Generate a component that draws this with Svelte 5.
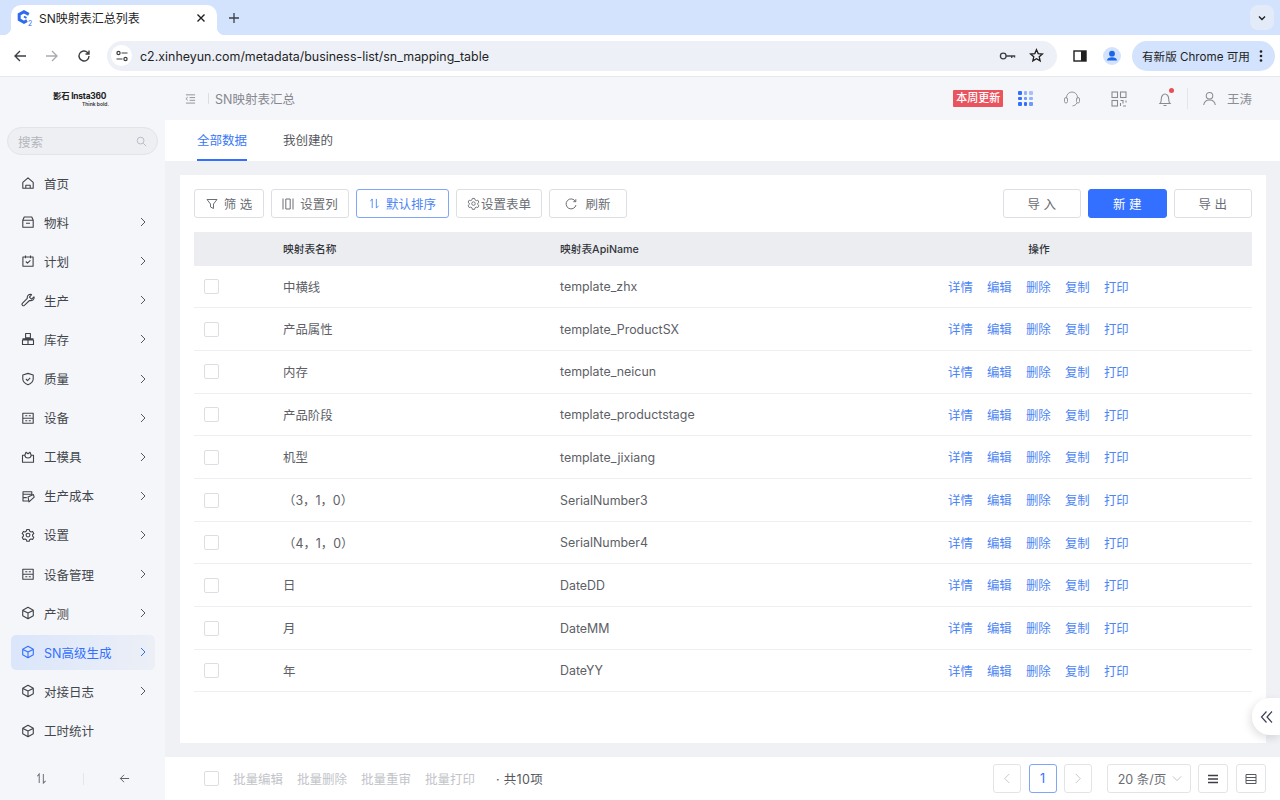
<script>
  const menu = [
    { label: '首页', icon: 'home', arrow: false },
    { label: '物料', icon: 'box', arrow: true },
    { label: '计划', icon: 'plan', arrow: true },
    { label: '生产', icon: 'wrench', arrow: true },
    { label: '库存', icon: 'stock', arrow: true },
    { label: '质量', icon: 'shield', arrow: true },
    { label: '设备', icon: 'device', arrow: true },
    { label: '工模具', icon: 'mould', arrow: true },
    { label: '生产成本', icon: 'cost', arrow: true },
    { label: '设置', icon: 'gear', arrow: true },
    { label: '设备管理', icon: 'device', arrow: true },
    { label: '产测', icon: 'cube', arrow: true },
    { label: 'SN高级生成', icon: 'cube', arrow: true, active: true },
    { label: '对接日志', icon: 'cube', arrow: true },
    { label: '工时统计', icon: 'cube', arrow: false }
  ];
  const gear = 'M5.800 1.500h2.400l.4 1.600 1.400.8 1.600-.5 1.200 2.100-1.200 1.100v1.600l1.200 1.100-1.200 2.100-1.600-.5-1.400.8-.4 1.600H5.800l-.4-1.600-1.400-.8-1.600.5-1.200-2.100 1.200-1.100V6.600L1.200 5.500l1.200-2.100 1.600.5 1.400-.8zM7 5.200a1.900 1.900 0 1 0 0 3.800 1.900 1.900 0 0 0 0-3.800z';
  const icons = {
    home: 'M1.800 6.300 7 1.800l5.200 4.500V12.300H1.800zM4.800 12.300V9.200h4.400v3.100',
    box: 'M3.200 2h7.600l1.400 3.200H1.800zM1.800 5.200h10.400V12.300H1.800zM5 8.300h4',
    plan: 'M1.900 3h10.200V12.300H1.900zM4.500 1.400v2.800M9.500 1.400v2.800M4.800 7.500l1.700 1.700L9.400 6.300',
    wrench: 'M13 3.800 10.600 6.200 8.400 4.200 10.600 1.600C8 .8 5.800 2.600 6.300 5.300L1.300 10.400c-1 1.400.8 3 2.100 1.900L8.500 7.500c2.800.6 5.200-1.200 4.500-3.700z',
    stock: 'M4.600 1.500h4.800v4.300H4.600zM1.500 8h5.500v4.500H1.500zM7 8h5.500v4.500H7zM1.500 6.900h11',
    shield: 'M7 1.400 12.200 3v4c0 3-2.400 4.600-5.200 5.800C4.200 11.600 1.800 10 1.800 7V3zM4.900 7l1.600 1.600 2.700-2.800',
    device: 'M1.800 2.300h10.400V12.300H1.800zM1.800 7.200h10.400M4.300 4.800h2M7.800 4.800h2M4.300 9.700h2M7.800 9.700h2',
    mould: 'M1.500 5.300h2.300c.2 1.600 1.500 2.700 3.200 2.700s3-1.100 3.200-2.700h2.300V12.300H1.500zM3.800 5.300 5 2.300l2 1.500 2-1.500 1.200 3',
    cost: 'M2 2.800h8.800v2.400H2zM2 5.200v6.800h5.500M2 8.600h3.800M7 8l5.400-2.400.8 2.600L8 12.800z',
    gear,
    cube: 'M7 1.300 12.300 4.200v5.600L7 12.700 1.700 9.800V4.200zM2 4.400 7 7l5-2.600M7 7v5.500'
  };
  const rows = [
    ['中横线', 'template_zhx'],
    ['产品属性', 'template_ProductSX'],
    ['内存', 'template_neicun'],
    ['产品阶段', 'template_productstage'],
    ['机型', 'template_jixiang'],
    ['（3，1，0）', 'SerialNumber3'],
    ['（4，1，0）', 'SerialNumber4'],
    ['日', 'DateDD'],
    ['月', 'DateMM'],
    ['年', 'DateYY']
  ];
  const actions = ['详情', '编辑', '删除', '复制', '打印'];
  const batch = ['批量编辑', '批量删除', '批量重审', '批量打印'];
</script>

<div class="browser">
  <div class="tabstrip">
    <div class="tab">
      <svg class="favicon" viewBox="0 0 16 16" width="16" height="16">
        <path d="M11.800 4.300 7 1.800 2.200 4.400v5.200L7 12.200l3-1.600" fill="none" stroke="#2f6bed" stroke-width="3"/>
        <path d="M7 6.500l2.500 1.500" stroke="#2f6bed" stroke-width="2"/>
        <text x="11" y="15.500" class="fav2">2</text>
      </svg>
      <span class="tabtitle">SN映射表汇总列表</span>
      <svg class="tabx" viewBox="0 0 10 10" width="10" height="10"><path d="M1.500 1.500l7 7M8.500 1.500l-7 7" stroke="#1f1f1f" stroke-width="1.400"/></svg>
    </div>
    <svg class="plus" viewBox="0 0 12 12" width="12" height="12"><path d="M6 1v10M1 6h10" stroke="#3c4043" stroke-width="1.300"/></svg>
    <div class="spring"></div>
    <div class="tabmenu"><svg viewBox="0 0 10 10" width="10" height="10"><path d="M2 3.500 5 6.500 8 3.500" fill="none" stroke="#1f1f1f" stroke-width="1.400"/></svg></div>
  </div>
  <div class="toolbar">
    <svg class="nav" viewBox="0 0 14 14" width="14" height="14"><path d="M13 7H2M7 2 2 7l5 5" fill="none" stroke="#3c4043" stroke-width="1.400"/></svg>
    <svg class="nav" viewBox="0 0 14 14" width="14" height="14"><path d="M1 7h11M7 2l5 5-5 5" fill="none" stroke="#a8abb0" stroke-width="1.400"/></svg>
    <svg class="nav" viewBox="0 0 14 14" width="14" height="14"><path d="M12 7a5 5 0 1 1-1.500-3.600L12 5M12 1.500V5H8.500" fill="none" stroke="#3c4043" stroke-width="1.400"/></svg>
    <div class="omnibox">
      <span class="site">
        <svg viewBox="0 0 14 14" width="14" height="14"><g fill="none" stroke="#3c4043" stroke-width="1.200"><circle cx="3.500" cy="4" r="1.600"/><path d="M6.500 4h6M1.500 10h6"/><circle cx="10.500" cy="10" r="1.600"/></g></svg>
      </span>
      <span class="url">c2.xinheyun.com/metadata/business-list/sn_mapping_table</span>
      <svg class="key" viewBox="0 0 18 12" width="17" height="12"><g fill="none" stroke="#3c4043" stroke-width="1.400"><circle cx="4.500" cy="6" r="3"/><path d="M7.500 6h9v1.500M13.500 6v2"/></g></svg>
      <svg class="star" viewBox="0 0 16 16" width="15" height="15"><path d="M8 1.800 9.800 6l4.500.4-3.400 3 1 4.400L8 11.500l-3.900 2.300 1-4.400-3.400-3L6.200 6z" fill="none" stroke="#1f1f1f" stroke-width="1.400"/></svg>
    </div>
    <svg class="panel" viewBox="0 0 14 14" width="14" height="14"><rect x="1" y="2" width="12" height="10" fill="none" stroke="#1f1f1f" stroke-width="1.400"/><rect x="8" y="2" width="5" height="10" fill="#1f1f1f"/></svg>
    <span class="avatar"><svg viewBox="0 0 18 18" width="18" height="18"><circle cx="9" cy="9" r="9" fill="#d3e3fd"/><circle cx="9" cy="6.700" r="2.900" fill="#1a66e8"/><path d="M3.800 13.500c.5-2.400 2.700-3.200 5.200-3.200s4.700.8 5.200 3.200z" fill="#1a66e8"/></svg></span>
    <div class="update">
      <span>有新版 Chrome 可用</span>
      <svg viewBox="0 0 4 14" width="4" height="14"><g fill="#1f1f1f"><circle cx="2" cy="2.500" r="1.300"/><circle cx="2" cy="7" r="1.300"/><circle cx="2" cy="11.500" r="1.300"/></g></svg>
    </div>
  </div>
</div>

<div class="app">
  <aside class="sidebar">
    <div class="logo">
      <div class="logomark">影石 Insta360</div>
      <div class="logosub">Think bold.</div>
    </div>
    <div class="search">
      <span>搜索</span>
      <svg viewBox="0 0 12 12" width="11" height="11"><circle cx="5" cy="5" r="3.700" fill="none" stroke="#b4b8c0" stroke-width="1"/><path d="M8 8l3 3" stroke="#b4b8c0"/></svg>
    </div>
    <nav class="menu">
      {#each menu as item}
        <div class="item" class:active={item.active}>
          <svg class="micon" viewBox="0 0 14 14" width="14" height="14"><path d={icons[item.icon]} fill="none" stroke="currentColor" stroke-width="1.100" stroke-linejoin="round"/></svg>
          <span class="mlabel">{item.label}</span>
          {#if item.arrow}
            <svg class="marrow" viewBox="0 0 8 10" width="8" height="10"><path d="M2 1l4 4-4 4" fill="none" stroke="currentColor" stroke-width="1"/></svg>
          {/if}
        </div>
      {/each}
    </nav>
    <div class="sidefoot">
      <svg viewBox="0 0 12 12" width="11" height="11"><path d="M3.500 11V1L1.500 3.500M8 1v10l2.500-2.500" fill="none" stroke="#6b6f76" stroke-width="1.100"/></svg>
      <span class="footsep"></span>
      <svg viewBox="0 0 12 12" width="11" height="11"><path d="M11 6H1.500M5.500 2 1.500 6l4 4" fill="none" stroke="#50545b" stroke-width="1"/></svg>
    </div>
  </aside>

  <main class="main">
    <header class="topbar">
      <svg class="fold" viewBox="0 0 12 12" width="11" height="11"><path d="M1 2h10M5 5h6M5 8h6M1 11h10M3 4.500 1 6.200 3 8" fill="none" stroke="#8a8d93" stroke-width="1"/></svg>
      <span class="crumbsep"></span>
      <span class="crumb">SN映射表汇总</span>
      <div class="spring"></div>
      <span class="weekly">本周更新</span>
      <span class="dots">
        {#each [1,.5,.4,1,.7,.5,1,1,.7] as o}
          <i style="opacity:{o}"></i>
        {/each}
      </span>
      <svg class="headset" viewBox="0 0 18 18" width="18" height="18"><path d="M3.500 8.500V7.500a5.500 5.500 0 0 1 11 0v1M13.800 13c-.6 1.800-2.400 2.800-4.300 2.800" fill="none" stroke="#95989e" stroke-width="1"/><rect x="1.500" y="7.500" width="3" height="5.500" rx="1.500" fill="none" stroke="#95989e"/><rect x="13.500" y="7.500" width="3" height="5.500" rx="1.500" fill="none" stroke="#95989e"/></svg>
      <svg class="qr" viewBox="0 0 16 16" width="16" height="16"><g fill="none" stroke="#888b91" stroke-width="1.100"><rect x="1" y="1" width="5.500" height="5.500"/><rect x="9.500" y="1" width="5.500" height="5.500"/><rect x="1" y="9.500" width="5.500" height="5.500"/><path d="M9.500 9.500h2.500v3M15 9.500v2M9.500 12v3M12 15h3"/></g></svg>
      <span class="bell">
        <svg viewBox="0 0 16 16" width="16" height="16"><path d="M3 12.500h10c-1-1-1.300-2.200-1.300-4.500 0-2.800-1.800-5-3.700-5S4.300 5.200 4.300 8c0 2.300-.3 3.500-1.300 4.500zM6.500 14.500h3" fill="none" stroke="#888b91" stroke-width="1.100"/></svg>
        <b></b>
      </span>
      <span class="usersep"></span>
      <svg class="user" viewBox="0 0 16 16" width="15" height="15"><circle cx="8" cy="5" r="3.500" fill="none" stroke="#888b91" stroke-width="1.100"/><path d="M1.800 15c.4-3.500 3-5.500 6.200-5.500s5.800 2 6.200 5.500" fill="none" stroke="#888b91" stroke-width="1.100"/></svg>
      <span class="username">王涛</span>
    </header>

    <div class="tabs">
      <span class="t on">全部数据</span>
      <span class="t">我创建的</span>
    </div>

    <div class="canvas">
      <section class="card">
        <div class="actions">
          <button class="btn w-filter">
            <svg viewBox="0 0 12 12" width="12" height="12"><path d="M1 1.500h10L7.500 6v4.500l-3-1.500V6z" fill="none" stroke="#6b6f76"/></svg>
            <span class="sp">筛 选</span>
          </button>
          <button class="btn w-col">
            <svg viewBox="0 0 12 12" width="12" height="12"><path d="M1 .5v11M11 .5v11M3.800 1h4.400v10H3.800z" fill="none" stroke="#6b6f76"/></svg>
            <span>设置列</span>
          </button>
          <button class="btn primaryline w-sort">
            <svg viewBox="0 0 12 12" width="11" height="11"><path d="M3.500 11V1L1.500 3.500M8 1v10l2.500-2.500" fill="none" stroke="#4d85f5" stroke-width="1"/></svg>
            <span>默认排序</span>
          </button>
          <button class="btn w-form">
            <svg viewBox="0 0 14 14" width="13" height="13"><path d={gear} fill="none" stroke="#6b6f76"/></svg>
            <span class="tight">设置表单</span>
          </button>
          <button class="btn w-refresh">
            <svg viewBox="0 0 12 12" width="12" height="12"><path d="M10.500 3.500A5 5 0 1 0 11 7M10.800 1.200v2.500H8.300" fill="none" stroke="#6b6f76"/></svg>
            <span>刷新</span>
          </button>
          <div class="spring"></div>
          <button class="btn w-side">导 入</button>
          <button class="btn solid w-side">新 建</button>
          <button class="btn w-side">导 出</button>
        </div>

        <div class="grid head">
          <span></span>
          <span class="hcell">映射表名称</span>
          <span class="hcell">映射表ApiName</span>
          <span class="hcell center">操作</span>
        </div>
        {#each rows as r}
          <div class="grid row">
            <span class="check"></span>
            <span class="cell">{r[0]}</span>
            <span class="cell">{r[1]}</span>
            <span class="links">
              {#each actions as a}<span>{a}</span>{/each}
            </span>
          </div>
        {/each}

        <button class="collapse" aria-label="collapse">
          <svg viewBox="0 0 14 14" width="14" height="14"><path d="M6.500 1.500 1.500 7l5 5.500M12 1.500 7 7l5 5.500" fill="none" stroke="#3c4257" stroke-width="1.200"/></svg>
        </button>
      </section>
    </div>

    <footer class="bottom">
      <span class="check"></span>
      <div class="batch">
        {#each batch as b}<span>{b}</span>{/each}
      </div>
      <span class="total">· 共10项</span>
      <div class="spring"></div>
      <span class="pg"><svg viewBox="0 0 8 12" width="8" height="11"><path d="M6.500 1 1.500 6l5 5" fill="none" stroke="#c2c5cb"/></svg></span>
      <span class="pg cur">1</span>
      <span class="pg"><svg viewBox="0 0 8 12" width="8" height="11"><path d="M1.500 1l5 5-5 5" fill="none" stroke="#c2c5cb"/></svg></span>
      <span class="size">20 条/页
        <svg viewBox="0 0 12 8" width="10" height="7"><path d="M1 1.500 6 6.500l5-5" fill="none" stroke="#b4b8c0"/></svg>
      </span>
      <span class="vbtn"><svg viewBox="0 0 12 12" width="12" height="12"><path d="M1 2.500h10M1 6h10M1 9.500h10" stroke="#3c3f45" stroke-width="1.300"/></svg></span>
      <span class="vbtn"><svg viewBox="0 0 12 12" width="12" height="12"><path d="M1 1.500h10v9H1zM1 4.500h10M1 7.500h10" fill="none" stroke="#55585e" stroke-width="1"/></svg></span>
    </footer>
  </main>
</div>

<style>
  :global(body) {
    margin: 0;
    overflow: hidden;
    font-family: Inter, "Noto Sans CJK SC", sans-serif;
    color: #4a4d53;
  }
  button { font: inherit; }
  svg { flex: none; display: block; }
  .spring { flex: 1; }

  .tabstrip {
    height: 35px;
    background: #d3e3fd;
    display: flex;
    align-items: flex-end;
    padding-left: 11px;
    padding-right: 6px;
  }
  .tab {
    width: 206px;
    height: 30px;
    background: #fff;
    border-radius: 10px 10px 0 0;
    display: flex;
    align-items: center;
    padding: 0 11px 5px 6px;
    box-sizing: border-box;
    position: relative;
  }
  .tab::before, .tab::after {
    content: "";
    position: absolute;
    bottom: 0;
    width: 8px;
    height: 8px;
  }
  .tab::before { left: -8px; background: radial-gradient(circle at 0 0, #d3e3fd 8px, #fff 8.500px); }
  .tab::after { right: -8px; background: radial-gradient(circle at 100% 0, #d3e3fd 8px, #fff 8.500px); }
  .favicon { margin-right: 6px; }
  .fav2 { font-size: 7px; fill: #2f6bed; }
  .tabtitle { font-size: 12px; color: #1f1f1f; flex: 1; }
  .plus { margin: 0 0 11px 11px; }
  .tabmenu {
    width: 24px;
    height: 25px;
    border-radius: 8px;
    background: #e3ebf9;
    margin-bottom: 5px;
    display: flex;
    align-items: center;
    justify-content: center;
  }
  .toolbar {
    height: 41px;
    background: #fff;
    border-bottom: 1px solid #e8e9ec;
    display: flex;
    align-items: center;
    padding: 0 5px 0 13px;
  }
  .nav { margin-right: 18px; }
  .nav:nth-child(3) { margin-right: 16px; }
  .omnibox {
    width: 950px;
    flex: none;
    height: 30px;
    border-radius: 15px;
    background: #edf0f7;
    display: flex;
    align-items: center;
    box-sizing: border-box;
    padding: 0 13.500px 0 4px;
  }
  .site {
    width: 21px;
    height: 21px;
    border-radius: 50%;
    background: #fff;
    display: flex;
    align-items: center;
    justify-content: center;
    margin-right: 8px;
  }
  .url { font-size: 12.430px; color: #1f1f1f; flex: 1; padding-top: 1px; }
  .key { margin-right: 13px; }
  .panel { margin-left: 16px; }
  .avatar { margin-left: 16px; margin-right: 11px; }
  .update {
    width: 143px;
    flex: none;
    height: 30px;
    border-radius: 15px;
    background: #d3e3fd;
    display: flex;
    align-items: center;
    justify-content: space-between;
    padding: 0 12px 0 10px;
    box-sizing: border-box;
    font-size: 11.600px;
    color: #1f1f1f;
  }

  .app { display: flex; height: 723px; background: #f5f6fa; }
  .sidebar {
    width: 165px;
    flex: none;
    display: flex;
    flex-direction: column;
    position: relative;
  }
  .logo { height: 50px; padding: 14px 0 0 53px; box-sizing: border-box; }
  .logomark { font-size: 8.400px; font-weight: 700; color: #222; line-height: 10px; white-space: nowrap; letter-spacing: -.2px; }
  .logosub { font-size: 5px; font-weight: 600; color: #333; line-height: 6px; padding-left: 29px; white-space: nowrap; }
  .search {
    margin: 0 7px 0 7px;
    height: 28px;
    box-sizing: border-box;
    border: 1px solid #e2e4e9;
    border-radius: 14px;
    background: #edeff3;
    display: flex;
    align-items: center;
    justify-content: space-between;
    padding: 0 10px;
    font-size: 12.500px;
    color: #b3b6bc;
  }
  .menu { display: flex; flex-direction: column; margin-top: 10.500px; padding: 0 10px 0 11px; gap: 4.120px; }
  .item {
    height: 35px;
    flex: none;
    display: flex;
    align-items: center;
    padding: 0 8px 0 10px;
    border-radius: 5px;
    font-size: 12.500px;
    color: #43464c;
  }
  .micon { margin-right: 9px; color: #3f4248; }
  .mlabel { flex: 1; white-space: nowrap; }
  .marrow { color: #55585e; }
  .active { background: linear-gradient(90deg, #dbe6fb, #eceff6); color: #3370ff; }
  .active .micon, .active .marrow { color: #3370ff; }
  .sidefoot {
    position: absolute;
    left: 0;
    right: 0;
    bottom: 0;
    height: 43px;
    display: flex;
    align-items: center;
    padding-left: 36px;
  }
  .footsep { width: 1px; height: 12px; background: #e3e5e9; margin: 0 35px 0 36px; }

  .main { flex: 1; min-width: 0; display: flex; flex-direction: column; }
  .topbar {
    height: 43px;
    display: flex;
    align-items: center;
    flex: none;
    padding-right: 28px;
    padding-left: 20px;
  }
  .crumbsep { width: 1px; height: 11px; background: #dcdee2; margin: 0 6px 0 12px; }
  .crumb { font-size: 12.500px; color: #85888e; }
  .weekly {
    width: 50px;
    height: 17px;
    line-height: 17px;
    text-align: center;
    background: #e9545f;
    color: #fff;
    font-size: 11px;
    font-weight: 500;
    border-radius: 1px;
    margin-right: 15px;
  }
  .dots {
    display: grid;
    grid-template-columns: repeat(3, 3.600px);
    gap: 2px;
    margin-right: 30px;
  }
  .dots i { width: 3.600px; height: 3.600px; background: #3370ff; border-radius: 1px; display: block; }
  .headset { margin-right: 30px; }
  .qr { margin-right: 30px; }
  .bell { position: relative; margin-right: 14px; }
  .bell b {
    position: absolute;
    top: -3px;
    right: -1px;
    width: 5px;
    height: 5px;
    border-radius: 50%;
    background: #ec4d55;
  }
  .usersep { width: 1px; height: 21px; background: #e5e6ea; margin-right: 14px; }
  .username { margin-left: 10px; font-size: 12.500px; color: #8b8e94; }

  .tabs {
    height: 41px;
    flex: none;
    background: #fff;
    display: flex;
    padding-left: 32px;
    gap: 36px;
    font-size: 12.500px;
    color: #55585e;
    box-sizing: border-box;
  }
  .t { padding-top: 13px; height: 41px; box-sizing: border-box; line-height: 16px; }
  .on { color: #3a78f5; border-bottom: 2px solid #3370ff; }

  .canvas {
    flex: 1;
    min-height: 0;
    background: #f0f1f5;
    padding: 14px 14px 14px 15px;
    display: flex;
  }
  .card {
    flex: 1;
    background: #fff;
    padding: 14px 14px 0;
    position: relative;
  }
  .actions { display: flex; gap: 7px; height: 29px; margin-bottom: 14px; }
  .btn {
    height: 29px;
    box-sizing: border-box;
    border: 1px solid #dddfe4;
    border-radius: 3px;
    background: #fff;
    color: #6a6d73;
    font-size: 12.500px;
    display: flex;
    align-items: center;
    justify-content: center;
    gap: 6px;
    padding: 0;
  }
  .w-filter { width: 70px; }
  .w-col { width: 78px; }
  .w-sort { width: 93px; color: #4d85f5; }
  .w-form { width: 86px; gap: 1px; }
  .w-refresh { width: 78px; gap: 8px; }
  .w-side { width: 78.500px; }
  .primaryline { border-color: #7fa6f7; }
  .solid { background: #3370ff; border-color: #3370ff; color: #fff; }

  .grid {
    display: grid;
    grid-template-columns: 89px 277px 352px 1fr;
    align-items: center;
  }
  .head {
    height: 33.500px;
    background: #ebedf0;
    font-size: 10.700px;
    color: #33363b;
    font-weight: 500;
  }
  .center { text-align: center; padding-right: 86px; }
  .row {
    height: 42.700px;
    box-sizing: border-box;
    padding-top: .5px;
    border-bottom: 1px solid #eeeff2;
    font-size: 12.400px;
    color: #5d6066;
  }
  .check {
    width: 15px;
    height: 15px;
    box-sizing: border-box;
    border: 1px solid #dcdee3;
    border-radius: 2px;
    background: #fff;
    display: block;
    margin-left: 10px;
  }
  .links { display: flex; gap: 14.200px; color: #4d85f5; padding-left: 36px; }

  .collapse {
    position: absolute;
    right: -14px;
    top: 523px;
    width: 28px;
    height: 37px;
    padding: 0 0 0 2px;
    border: 0;
    background: #fff;
    border-radius: 18px 0 0 18px;
    box-shadow: -2px 3px 8px rgba(0, 0, 0, .12);
    display: flex;
    align-items: center;
    justify-content: center;
  }

  .bottom {
    height: 43px;
    flex: none;
    background: #fff;
    display: flex;
    align-items: center;
    padding: 0 14px 0 39px;
    font-size: 12.500px;
  }
  .bottom .check { margin: 0; }
  .batch { display: flex; gap: 14px; color: #c2c4c9; margin-left: 14px; }
  .total { margin-left: 21px; color: #55585e; letter-spacing: .3px; }
  .pg {
    width: 28px;
    height: 29px;
    box-sizing: border-box;
    border: 1px solid #e3e4e8;
    border-radius: 3px;
    display: flex;
    align-items: center;
    justify-content: center;
    margin-right: 7.500px;
  }
  .cur { border-color: #7fa6f7; color: #3370ff; }
  .size {
    width: 84px;
    height: 29px;
    box-sizing: border-box;
    border: 1px solid #e3e4e8;
    border-radius: 3px;
    display: flex;
    align-items: center;
    justify-content: center;
    gap: 6px;
    padding-left: 2px;
    margin: 0 7px 0 7.500px;
    color: #6a6d73;
    white-space: nowrap;
  }
  .vbtn {
    width: 30px;
    height: 29px;
    box-sizing: border-box;
    border: 1px solid #e3e4e8;
    border-radius: 3px;
    display: flex;
    align-items: center;
    justify-content: center;
    margin-right: 7.500px;
  }
  .vbtn:last-child { margin-right: 0; width: 30.500px; }
</style>
